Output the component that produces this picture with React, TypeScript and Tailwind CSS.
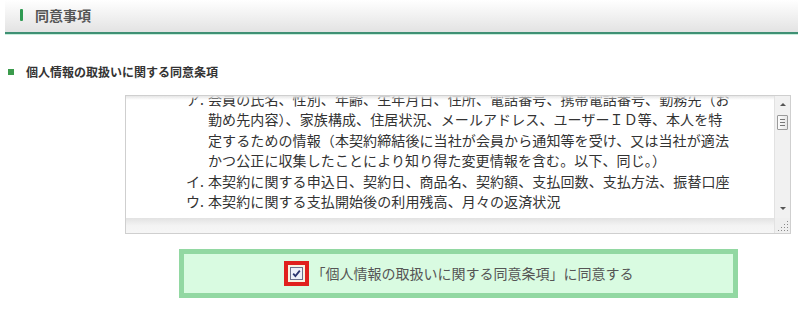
import type { ReactNode } from 'react';

const font = { fontFamily: '"Noto Sans CJK JP", "Noto Sans", sans-serif' };

function Item({ label, children }: { label?: string; children: ReactNode }) {
  return (
    <div className="flex h-[20.5px] items-center whitespace-nowrap">
      <span className="w-[22px] shrink-0">{label && `${label}.`}</span>
      <span>{children}</span>
    </div>
  );
}

function Scrollbar() {
  return (
    <div className="flex w-[16px] flex-col border-l border-[#e2e2e2] bg-[#f1f1f1]">
      <div className="flex h-[122px] flex-col items-center">
        <div className="mt-[7px] h-0 w-0 border-x-[3px] border-b-[3px] border-x-transparent border-b-[#555]" />
        <div className="mt-[9px] flex h-[15px] w-[11px] flex-col items-center justify-center gap-[2px] rounded-[1px] border border-[#9a9a9a] bg-gradient-to-r from-[#fdfdfd] to-[#e6e6e6]">
          <div className="h-px w-[5px] bg-[#777]" />
          <div className="h-px w-[5px] bg-[#777]" />
          <div className="h-px w-[5px] bg-[#777]" />
        </div>
        <div className="flex-1" />
        <div className="mb-[8px] h-0 w-0 border-x-[3px] border-t-[3px] border-x-transparent border-t-[#555]" />
      </div>
      <div className="relative h-[14px] bg-[#efefef]">
        <svg width="16" height="14" viewBox="0 0 16 14" className="absolute inset-0">
          {[
            [12, 3], [12, 6], [9, 6], [12, 9], [9, 9], [6, 9], [12, 12], [9, 12], [6, 12], [3, 12],
          ].map(([x, y], i) => (
            <rect key={i} x={x} y={y} width="1" height="1" fill="#8a8a8a" />
          ))}
        </svg>
      </div>
    </div>
  );
}

export default function App() {
  return (
    <div className="h-[311px] w-[798px] overflow-hidden bg-white" style={font}>
      <div className="ml-[5px] border-b border-[#c9eedc]">
        <div className="flex h-[34px] items-center border-b-2 border-[#3f9074] bg-gradient-to-b from-white to-[#e3e3e3] pb-[2px]">
          <div className="ml-[15px] h-[12px] w-[3px] rounded-[1px] bg-[#2f9a52]" />
          <span className="ml-[12px] text-[14px] font-bold text-[#555]">同意事項</span>
        </div>
      </div>

      <div className="mt-[29px] flex h-[16px] items-center">
        <div className="ml-[8px] h-[6px] w-[6px] bg-[#3b9b4c]" />
        <span className="ml-[12px] text-[12px] font-bold text-[#333]">個人情報の取扱いに関する同意条項</span>
      </div>

      <div className="ml-[125px] mt-[15px] flex h-[139px] w-[666px] border border-[#cfcfcf] bg-white">
        <div className="flex flex-1 flex-col">
          <div className="relative h-[122px] overflow-hidden">
            <div className="absolute inset-x-0 top-0 z-10 h-[4px] bg-gradient-to-b from-[#e6e6e6] to-transparent" />
            <div className="-mt-[7px] pl-[60px] text-[14px] tracking-[0.1px] text-[#333]">
              <Item label="ア">会員の氏名、性別、年齢、生年月日、住所、電話番号、携帯電話番号、勤務先（お</Item>
              <Item>勤め先内容）、家族構成、住居状況、メールアドレス、ユーザーＩＤ等、本人を特</Item>
              <Item>定するための情報（本契約締結後に当社が会員から通知等を受け、又は当社が適法</Item>
              <Item>かつ公正に収集したことにより知り得た変更情報を含む。以下、同じ。）</Item>
              <Item label="イ">本契約に関する申込日、契約日、商品名、契約額、支払回数、支払方法、振替口座</Item>
              <Item label="ウ">本契約に関する支払開始後の利用残高、月々の返済状況</Item>
            </div>
          </div>
          <div className="h-[15px] bg-gradient-to-b from-[#e2e2e2] via-[#f3f3f3] to-[#f6f6f6]" />
        </div>
        <Scrollbar />
      </div>

      <div className="ml-[179px] mt-[15px] flex h-[49px] w-[559px] items-center justify-center border-[5px] border-[#92d8a2] bg-[#d9fbe1]">
        <div className="flex h-[25px] w-[25px] items-center justify-center border-[4px] border-[#e0201d] bg-[#f7f3e2]">
          <svg width="13" height="13" viewBox="0 0 13 13">
            <rect x="0.5" y="0.5" width="12" height="12" fill="#eef0fa" stroke="#6b6f8c" />
            <path d="M3.2 6.6 L5.4 9 L9.8 3.6" fill="none" stroke="#2a3470" strokeWidth="1.8" />
          </svg>
        </div>
        <span className="ml-[3px] text-[14px] text-[#555]">「個人情報の取扱いに関する同意条項」に同意する</span>
      </div>
    </div>
  );
}
